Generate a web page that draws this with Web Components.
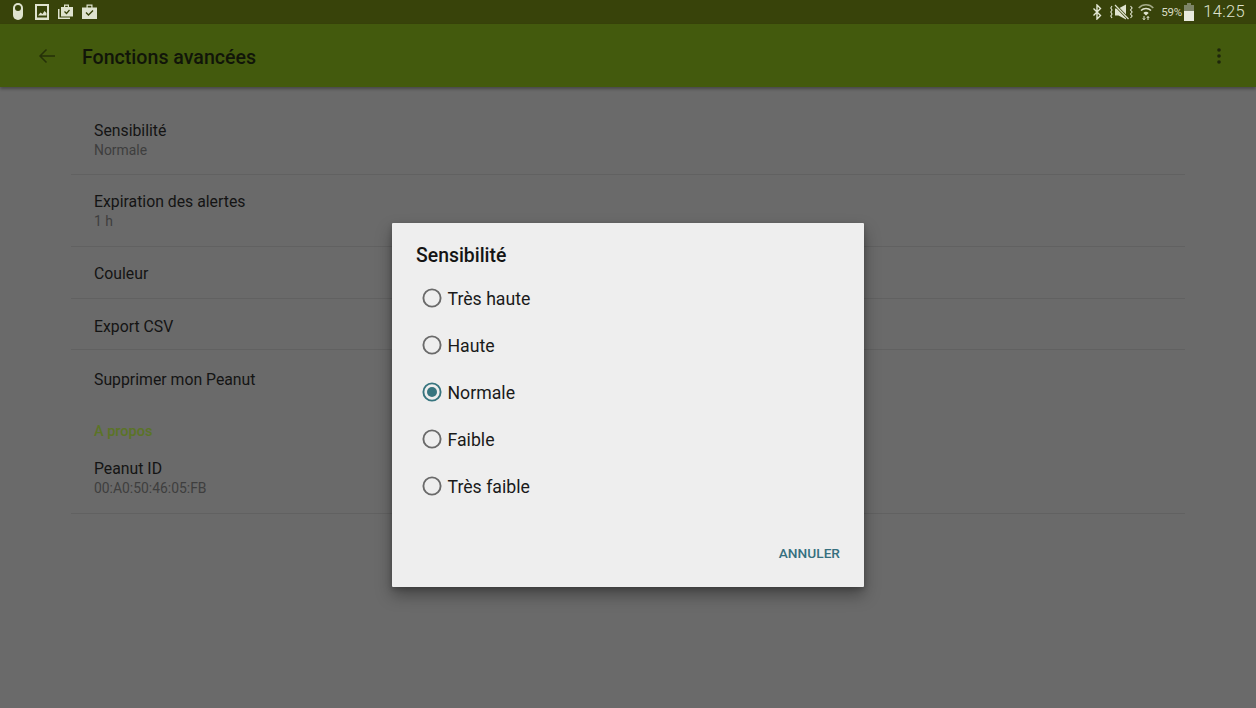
<!DOCTYPE html>
<html lang="fr"><head><meta charset="utf-8"><title>Fonctions avancées</title>
<style>
html,body{margin:0;padding:0;width:1256px;height:708px;overflow:hidden;background:#6a6a6a;font-family:Roboto,"Liberation Sans",sans-serif}
</style></head><body>
<app-screen>
  <status-bar></status-bar>
  <app-bar title="Fonctions avancées"></app-bar>
  <pref-list>
    <pref-row title="Sensibilité" sub="Normale" h="88" pt="34"></pref-row>
    <pref-row title="Expiration des alertes" sub="1 h" h="72" pt="17"></pref-row>
    <pref-row title="Couleur" h="52" pt="17"></pref-row>
    <pref-row title="Export CSV" h="51" pt="18"></pref-row>
    <pref-row title="Supprimer mon Peanut" h="71" pt="20" noline></pref-row>
    <pref-head>A propos</pref-head>
    <pref-row title="Peanut ID" sub="00:A0:50:46:05:FB" h="72" pt="17"></pref-row>
  </pref-list>
  <choice-dialog title="Sensibilité" action="ANNULER">
    <radio-row>Très haute</radio-row>
    <radio-row>Haute</radio-row>
    <radio-row checked>Normale</radio-row>
    <radio-row>Faible</radio-row>
    <radio-row>Très faible</radio-row>
  </choice-dialog>
</app-screen>
<script>
function def(name, html){
  customElements.define(name, class extends HTMLElement{
    connectedCallback(){
      if(this.shadowRoot) return;
      const r=this.attachShadow({mode:'open'});
      r.innerHTML=typeof html==='function'?html(this):html;
    }
  });
}
def('app-screen',`<style>:host{display:flex;flex-direction:column;position:relative;width:1256px;height:708px;overflow:hidden;background:#6a6a6a}</style><slot></slot>`);
def('status-bar',`<style>
:host{display:flex;align-items:center;height:24px;flex:none;background:#38430a;padding:0 11px 1px 13px;box-sizing:border-box}
.l{display:flex;align-items:center}
.r{margin-left:auto;display:flex;align-items:center}
svg{display:block;flex:none}
.pc{font-size:11.5px;color:#d8dcc6;margin:0 3px 0 7px;letter-spacing:-.2px;width:20px;white-space:nowrap}
.t{font-size:16.5px;color:#dde1cd;margin-left:9px;letter-spacing:.35px;font-weight:300}
</style>
<div class="l">
<svg width="10" height="17" viewBox="0 0 10 17" style="margin-right:12px"><rect x="0" y="0" width="10" height="17" rx="5" fill="#dfe3cf"/><circle cx="5" cy="5" r="3" fill="#38430a"/></svg>
<svg width="14" height="16" viewBox="0 0 14 16" style="margin-right:9px"><path d="M0 0h14v16H0z" fill="#dfe3cf"/><path d="M2 2h10v11.500H2z" fill="#38430a"/><path d="M3 11.500l2.500-3 2 1.500 2-3 2 2v2.500z" fill="#dfe3cf"/></svg>
<svg width="15" height="15" viewBox="0 0 15 15" style="margin-right:9px"><path d="M0 5h1.500v8.500H12V15H0z" fill="#dfe3cf"/><path d="M3 3h3V.500h5V3h4v9.500H3zM7.200 1.700V3h2.600V1.700z" fill="#dfe3cf"/><path d="M6.500 7.500l2 2 3-3.500" fill="none" stroke="#38430a" stroke-width="1.200"/></svg>
<svg width="15" height="15" viewBox="0 0 15 15"><path d="M0 3.500h4.500V.500h6v3H15V15H0zM5.700 1.700v1.800h3.600V1.700z" fill="#dfe3cf"/><path d="M4 8.500l2.500 2.500 4.500-4.500" fill="none" stroke="#38430a" stroke-width="1.400"/></svg>
</div>
<div class="r">
<svg width="10" height="16" viewBox="0 0 10 16" style="margin-right:8px"><path d="M1.500 4.500l7 7L5 15V1l3.500 3.500-7 7" fill="none" stroke="#e4e8d6" stroke-width="1.400"/></svg>
<svg width="23" height="16" viewBox="0 0 23 16" style="margin-right:5px"><path d="M5 4.500h3.500L16 .5v15L8.500 11.500H5z" fill="#dfe3cf"/><path d="M5 1l13.500 14" stroke="#38430a" stroke-width="2.600"/><path d="M5 1l13.500 14" stroke="#dfe3cf" stroke-width="1.200"/><path d="M2 2L.8 4 2 6 .8 8 2 10l-1.200 2L2 14M20.500 2l1.600 2-1.600 2 1.600 2-1.600 2 1.600 2-1.600 2" fill="none" stroke="#dfe3cf" stroke-width="1.100"/></svg>
<svg width="16" height="18" viewBox="0 0 16 18"><path d="M.7 5a10 10 0 0 1 14.600 0" fill="none" stroke="#a4aa88" stroke-width="1.500"/><path d="M3 7.500a7 7 0 0 1 10 0" fill="none" stroke="#dfe3cf" stroke-width="1.500"/><path d="M5.300 10a3.600 3.600 0 0 1 5.400 0L8 12.500z" fill="#dfe3cf"/><path d="M6 13v3.500M4.800 15.300L6 16.800l1.200-1.500M10 17v-3.500M8.800 15l1.200-1.500L11.200 15" fill="none" stroke="#dfe3cf" stroke-width="1"/></svg>
<span class="pc">59%</span>
<svg width="10" height="18" viewBox="0 0 10 18"><path d="M3 0h4v2h3v7H0V2h3z" fill="#7d8468"/><path d="M0 8h10v10H0z" fill="#e8eade"/></svg>
<span class="t">14:25</span>
</div>`);
def('app-bar',e=>`<style>
:host{display:flex;align-items:center;height:63px;flex:none;background:#435a0d;box-sizing:border-box;position:relative;box-shadow:0 2px 3px rgba(0,0,0,.32)}
svg{display:block;flex:none}
.b{margin-left:38px;margin-right:26px}
.t{font-size:19.6px;font-weight:500;color:#111509;position:relative;top:2px}
.m{margin-left:auto;margin-right:35px}
</style>
<svg class="b" width="18" height="18" viewBox="0 0 18 18"><path d="M17 9H2M8.500 2.500L2 9l6.500 6.500" fill="none" stroke="#263109" stroke-width="1.500"/></svg>
<span class="t">${e.getAttribute('title')}</span>
<svg class="m" width="4" height="16" viewBox="0 0 4 16"><circle cx="2" cy="2" r="1.800" fill="#1e260c"/><circle cx="2" cy="8" r="1.800" fill="#1e260c"/><circle cx="2" cy="14" r="1.800" fill="#1e260c"/></svg>`);
def('pref-list',`<style>:host{display:block;margin:0 71px;position:relative}</style><slot></slot>`);
def('pref-row',e=>{
 const s=e.getAttribute('sub');
 return `<style>
:host{display:block;box-sizing:border-box;height:${e.getAttribute('h')}px;padding:${e.getAttribute('pt')}px 0 0 23px;${e.hasAttribute('noline')?'':'border-bottom:1px solid #616161;'}}
.t{font-size:15.8px;line-height:20px;color:#141414}
.s{font-size:13.9px;line-height:20px;margin-top:-1px;color:#3e3e3e}
</style><div class="t">${e.getAttribute('title')}</div>${s?`<div class="s">${s}</div>`:''}`});
def('pref-head',`<style>:host{display:block;height:21px;box-sizing:border-box;padding:1px 0 0 23px;font-size:14.5px;line-height:20px;font-weight:500;color:#5b7426}</style><slot></slot>`);
def('choice-dialog',e=>`<style>
:host{position:absolute;left:392px;top:223px;width:471.5px;height:363.5px;box-sizing:border-box;background:#eeeeee;display:flex;flex-direction:column;border-radius:1px;box-shadow:0 8px 16px rgba(0,0,0,.35),0 2px 5px rgba(0,0,0,.2)}
.t{font-size:19.4px;font-weight:500;line-height:24px;color:#141414;padding:21px 24px 0}
.l{display:flex;flex-direction:column;padding:7px 0 0 30px}
.a{margin-top:auto;align-self:flex-end;font-size:13.7px;font-weight:500;line-height:20px;color:#36707f;padding:0 23.5px 23.5px 0}
</style><div class="t">${e.getAttribute('title')}</div><div class="l"><slot></slot></div><div class="a">${e.getAttribute('action')}</div>`);
def('radio-row',e=>`<style>
:host{display:flex;align-items:center;height:47px;font-size:17.7px;color:#1a1a1a}
svg{display:block;flex:none;margin:-1px 6px 0 -.5px}
span{position:relative;top:.5px}
</style><svg width="20" height="20" viewBox="0 0 20 20">${e.hasAttribute('checked')
?'<circle cx="10" cy="10" r="8.600" fill="none" stroke="#37757f" stroke-width="1.900"/><circle cx="10" cy="10" r="5" fill="#37757f"/>'
:'<circle cx="10" cy="10" r="8.600" fill="none" stroke="#6a6a6a" stroke-width="1.900"/>'}</svg><span><slot></slot></span>`);
</script>
</body></html>
